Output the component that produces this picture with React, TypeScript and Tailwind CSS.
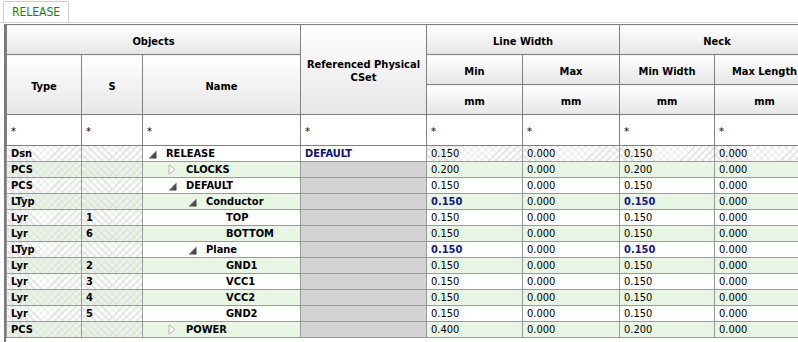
import React from "react";

type Row = {
  type: string;
  s: string;
  level: number;
  icon: "open" | "closed" | "none";
  name: string;
  ref?: string;
  min: string;
  max: string;
  mw: string;
  ml: string;
  bold?: boolean;
};

const rows: Row[] = [
  { type: "Dsn", s: "", level: 0, icon: "open", name: "RELEASE", ref: "DEFAULT", min: "0.150", max: "0.000", mw: "0.150", ml: "0.000" },
  { type: "PCS", s: "", level: 1, icon: "closed", name: "CLOCKS", min: "0.200", max: "0.000", mw: "0.200", ml: "0.000" },
  { type: "PCS", s: "", level: 1, icon: "open", name: "DEFAULT", min: "0.150", max: "0.000", mw: "0.150", ml: "0.000" },
  { type: "LTyp", s: "", level: 2, icon: "open", name: "Conductor", min: "0.150", max: "0.000", mw: "0.150", ml: "0.000", bold: true },
  { type: "Lyr", s: "1", level: 3, icon: "none", name: "TOP", min: "0.150", max: "0.000", mw: "0.150", ml: "0.000" },
  { type: "Lyr", s: "6", level: 3, icon: "none", name: "BOTTOM", min: "0.150", max: "0.000", mw: "0.150", ml: "0.000" },
  { type: "LTyp", s: "", level: 2, icon: "open", name: "Plane", min: "0.150", max: "0.000", mw: "0.150", ml: "0.000", bold: true },
  { type: "Lyr", s: "2", level: 3, icon: "none", name: "GND1", min: "0.150", max: "0.000", mw: "0.150", ml: "0.000" },
  { type: "Lyr", s: "3", level: 3, icon: "none", name: "VCC1", min: "0.150", max: "0.000", mw: "0.150", ml: "0.000" },
  { type: "Lyr", s: "4", level: 3, icon: "none", name: "VCC2", min: "0.150", max: "0.000", mw: "0.150", ml: "0.000" },
  { type: "Lyr", s: "5", level: 3, icon: "none", name: "GND2", min: "0.150", max: "0.000", mw: "0.150", ml: "0.000" },
  { type: "PCS", s: "", level: 1, icon: "closed", name: "POWER", min: "0.400", max: "0.000", mw: "0.200", ml: "0.000" },
];

const hatch =
  "bg-[image:repeating-linear-gradient(45deg,transparent_0_4px,#dedede_4px_5px),repeating-linear-gradient(-45deg,transparent_0_4px,#dedede_4px_5px)]";

const indent = ["pl-[5px]", "pl-[25px]", "pl-[45px]", "pl-[65px]"];

const TreeIcon = ({ kind }: { kind: Row["icon"] }) => {
  if (kind === "open")
    return (
      <svg width="9" height="9" viewBox="0 0 9 9" className="mt-[1px]">
        <defs>
          <linearGradient id="tri" x1="0" y1="0" x2="1" y2="1">
            <stop offset="0" stopColor="#8a8a8a" />
            <stop offset="1" stopColor="#333" />
          </linearGradient>
        </defs>
        <polygon points="8.5,0.5 8.5,8.5 0.5,8.5" fill="url(#tri)" />
      </svg>
    );
  if (kind === "closed")
    return (
      <svg width="8" height="11" viewBox="0 0 8 11">
        <polygon points="1,0.8 7,5.5 1,10.2" fill="#fff" stroke="#b4b4b4" strokeWidth="1" />
      </svg>
    );
  return null;
};

const th = "border border-[#808080] bg-linear-to-b from-white to-[#e6e6e6] font-bold text-center align-middle leading-[13px] pt-[3px]";
const filt = "border border-[#808080] bg-white text-left align-middle pl-[4px]";
const td = "border border-[#9a9a9a] align-middle pl-[4px] whitespace-nowrap";

export default function App() {
  return (
    <div className="w-[798px] h-[342px] overflow-hidden bg-white text-[11px] text-black font-['DejaVu_Sans_Condensed','Liberation_Sans',sans-serif] leading-none">
      <div className="flex h-[23px] items-end pl-[3px] border-b border-[#d4d4d4]">
        <div className="h-[21px] w-[66px] border border-b-0 border-[#d0d0d0] bg-white flex items-center justify-center text-[#0a8a0a] text-[12px]">
          RELEASE
        </div>
      </div>
      <div className="ml-[4px] mt-[1px] h-[318px] border-l-2 border-[#7a7a7a] overflow-hidden">
        <table className="table-fixed border-collapse w-[808px]">
          <colgroup>
            <col className="w-[75px]" />
            <col className="w-[61px]" />
            <col className="w-[158px]" />
            <col className="w-[126px]" />
            <col className="w-[96px]" />
            <col className="w-[97px]" />
            <col className="w-[95px]" />
            <col className="w-[100px]" />
          </colgroup>
          <thead>
            <tr className="h-[30px]">
              <th colSpan={3} className={th}>Objects</th>
              <th rowSpan={3} className={th}>
                Referenced Physical
                <br />
                CSet
              </th>
              <th colSpan={2} className={th}>Line Width</th>
              <th colSpan={2} className={th}>Neck</th>
            </tr>
            <tr className="h-[30px]">
              <th rowSpan={2} className={th}>Type</th>
              <th rowSpan={2} className={th}>S</th>
              <th rowSpan={2} className={th}>Name</th>
              <th className={th}>Min</th>
              <th className={th}>Max</th>
              <th className={th}>Min Width</th>
              <th className={th}>Max Length</th>
            </tr>
            <tr className="h-[30px]">
              <th className={th}>mm</th>
              <th className={th}>mm</th>
              <th className={th}>mm</th>
              <th className={th}>mm</th>
            </tr>
            <tr className="h-[31px]">
              {Array.from({ length: 8 }).map((_, i) => (
                <td key={i} className={`${filt} pt-[3px]`}>*</td>
              ))}
            </tr>
          </thead>
          <tbody>
            {rows.map((r, i) => {
              const green = i % 2 === 1;
              const base = green ? "bg-[#e8f6e4]" : "bg-white";
              const dsn = i === 0;
              const val = `${td} ${base} ${dsn ? hatch : ""}`;
              const strong = r.bold ? "font-bold text-[#14148c]" : "";
              return (
                <tr key={i} className="h-[16px]">
                  <td className={`${td} ${base} ${hatch} font-bold`}>{r.type}</td>
                  <td className={`${td} ${base} ${hatch} font-bold`}>{r.s}</td>
                  <td className={`border border-[#9a9a9a] ${base} font-bold whitespace-nowrap`}>
                    <div className={`flex items-center ${indent[r.level]}`}>
                      <span className="w-[18px] flex items-center">
                        <TreeIcon kind={r.icon} />
                      </span>
                      <span>{r.name}</span>
                    </div>
                  </td>
                  {r.ref ? (
                    <td className={`${td} bg-white font-bold text-[#10107a]`}>{r.ref}</td>
                  ) : (
                    <td className={`${td} bg-[#d3d3d3]`}></td>
                  )}
                  <td className={`${val} ${strong}`}>{r.min}</td>
                  <td className={val}>{r.max}</td>
                  <td className={`${val} ${strong}`}>{r.mw}</td>
                  <td className={val}>{r.ml}</td>
                </tr>
              );
            })}
          </tbody>
        </table>
      </div>
    </div>
  );
}
